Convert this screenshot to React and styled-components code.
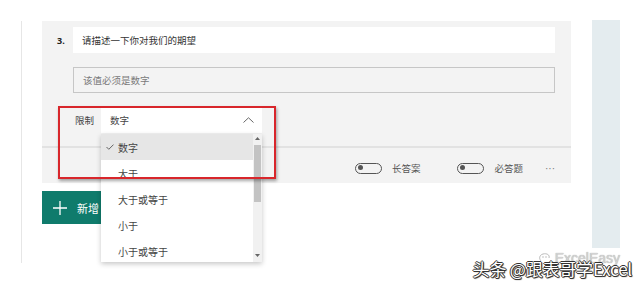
import React from "react";
import styled, { createGlobalStyle } from "styled-components";

const GlobalStyle = createGlobalStyle`
  html, body {
    margin: 0;
    padding: 0;
    background: #fff;
  }
  body {
    font-family: "Noto Sans CJK SC", "Noto Sans", sans-serif;
    color: #333;
  }
`;

const Page = styled.div`
  position: relative;
  width: 640px;
  height: 283px;
  overflow: hidden;
  display: flex;
  padding-top: 21px;
  padding-left: 21px;
  box-sizing: border-box;
`;

const Main = styled.div`
  width: 571px;
  height: 242px;
  border-left: 1px solid #e6e6e6;
  padding-left: 20px;
  box-sizing: border-box;
`;

const SidePanel = styled.div`
  width: 28px;
  height: 228px;
  margin-top: -1px;
  background: #e4ecef;
`;

const Card = styled.div`
  width: 529px;
  background: #f3f3f3;
`;

const CardBody = styled.div`
  padding: 6px 16px 13px 15px;
  border-bottom: 2px solid #e2e2e2;
  display: flex;
  flex-direction: column;
  gap: 14px;
`;

const QuestionRow = styled.div`
  display: flex;
  align-items: center;
`;

const Number = styled.span`
  width: 16px;
  font-family: "Noto Sans", sans-serif;
  font-weight: 700;
  font-size: 9px;
  color: #222;
`;

const QuestionBox = styled.div`
  flex: 1;
  height: 26px;
  background: #fff;
  display: flex;
  align-items: center;
  padding-left: 9px;
  font-size: 9.5px;
  color: #333;
`;

const AnswerBox = styled.div`
  margin-left: 16px;
  height: 26px;
  border: 1px solid #c6c6c6;
  box-sizing: border-box;
  display: flex;
  align-items: center;
  padding-left: 9px;
  font-size: 9.5px;
  color: #7a7a7a;
`;

const LimitRow = styled.div`
  position: relative;
  display: flex;
  align-items: center;
  padding-left: 18px;
`;

const LimitLabel = styled.span`
  width: 26px;
  font-size: 9.5px;
  color: #444;
`;

const SelectWrap = styled.div`
  position: relative;
  width: 161px;
`;

const SelectBox = styled.div`
  height: 26px;
  background: #fff;
  display: flex;
  align-items: center;
  justify-content: space-between;
  padding: 0 8px 0 9px;
  font-size: 9.5px;
  color: #444;
`;

const Dropdown = styled.div`
  position: absolute;
  top: 27px;
  left: 0;
  width: 161px;
  height: 128px;
  background: #fff;
  box-shadow: 0 2px 5px rgba(0, 0, 0, 0.22);
  display: flex;
  overflow: hidden;
  z-index: 5;
`;

const OptionList = styled.div`
  flex: 1;
`;

const Option = styled.div`
  height: 26px;
  display: flex;
  align-items: center;
  padding-left: ${(p) => (p.$selected ? "5px" : "17px")};
  gap: 4px;
  font-size: 10px;
  color: #444;
  background: ${(p) => (p.$selected ? "#e6e6e6" : "#fff")};
`;

const Scrollbar = styled.div`
  width: 9px;
  background: #f1f1f1;
  display: flex;
  flex-direction: column;
  align-items: center;
  justify-content: space-between;
  padding: 3px 0 5px;
  box-sizing: border-box;
  position: relative;
`;

const Thumb = styled.div`
  position: absolute;
  top: 11px;
  left: 1px;
  width: 7px;
  height: 57px;
  background: #c3c3c3;
`;

const Annotation = styled.div`
  position: absolute;
  left: 1px;
  top: -1px;
  width: 218px;
  height: 73px;
  border: 2px solid #d8262b;
  box-sizing: border-box;
  box-shadow: 1px 2px 3px rgba(0, 0, 0, 0.35);
  z-index: 6;
  pointer-events: none;
`;

const CardFooter = styled.div`
  height: 35px;
  display: flex;
  align-items: center;
  justify-content: flex-end;
  padding-right: 16px;
  padding-top: 5px;
  box-sizing: border-box;
`;

const ToggleGroup = styled.div`
  display: flex;
  align-items: center;
  gap: 10px;
  margin-right: ${(p) => p.$gap}px;
  font-size: 9.5px;
  color: #555;
`;

const Toggle = styled.div`
  width: 27px;
  height: 11px;
  border: 1.5px solid #555;
  border-radius: 8px;
  box-sizing: border-box;
  position: relative;
  &::after {
    content: "";
    position: absolute;
    left: 2px;
    top: 1.5px;
    width: 5px;
    height: 5px;
    border-radius: 50%;
    background: #555;
  }
`;

const More = styled.span`
  font-family: "Liberation Sans", sans-serif;
  font-size: 10px;
  color: #777;
`;

const AddButton = styled.div`
  margin-top: 8px;
  width: 92px;
  height: 33px;
  background: #0f7b6c;
  color: #fff;
  display: flex;
  align-items: center;
  gap: 10px;
  padding-left: 11px;
  box-sizing: border-box;
  font-size: 11px;
`;

const Watermark = styled.div`
  position: absolute;
  right: 8px;
  bottom: 4px;
  display: flex;
  flex-direction: column;
  align-items: flex-end;
  z-index: 10;
`;

const Faded = styled.div`
  display: flex;
  align-items: center;
  gap: 4px;
  margin-right: 12px;
  margin-bottom: -7px;
  font-family: "Liberation Sans", sans-serif;
  font-size: 14px;
  color: #d2d2d2;
  text-shadow: 0 0 1px #999;
`;

const Signature = styled.div`
  font-family: "Noto Sans CJK SC", "Liberation Sans", sans-serif;
  font-size: 17px;
  line-height: 20px;
  color: #fff;
  text-shadow: -1px 0 0 #333, 1px 0 0 #333, 0 -1px 0 #333, 0 1px 0 #333,
    1px 1px 1px #222;
  letter-spacing: -0.2px;
`;

const Chevron = () => (
  <svg width="11" height="6" viewBox="0 0 11 6">
    <path d="M0.5 5.5 L5.5 0.8 L10.5 5.5" fill="none" stroke="#666" strokeWidth="1" />
  </svg>
);

const Check = () => (
  <svg width="8" height="6" viewBox="0 0 8 6">
    <path d="M0.5 3 L2.8 5.3 L7.5 0.6" fill="none" stroke="#555" strokeWidth="0.9" />
  </svg>
);

const Arrow = ({ up }) => (
  <svg width="5" height="3" viewBox="0 0 5 3">
    <path d={up ? "M0 3 L2.5 0 L5 3 Z" : "M0 0 L2.5 3 L5 0 Z"} fill="#666" />
  </svg>
);

const Plus = () => (
  <svg width="14" height="14" viewBox="0 0 14 14">
    <path d="M7 0 V14 M0 7 H14" stroke="#fff" strokeWidth="1.3" />
  </svg>
);

const Bubble = () => (
  <svg width="12" height="10" viewBox="0 0 12 10">
    <path d="M2 8 C0 6 0 2 4 1 C8 0 11 2 10 5" fill="none" stroke="#bbb" strokeWidth="1" />
    <circle cx="4" cy="4" r="0.8" fill="#bbb" />
    <circle cx="7" cy="4" r="0.8" fill="#bbb" />
  </svg>
);

const options = ["数字", "大于", "大于或等于", "小于", "小于或等于"];

export default function App() {
  return (
    <>
      <GlobalStyle />
      <Page>
        <Main>
          <Card>
            <CardBody>
              <QuestionRow>
                <Number>3.</Number>
                <QuestionBox>请描述一下你对我们的期望</QuestionBox>
              </QuestionRow>
              <AnswerBox>该值必须是数字</AnswerBox>
              <LimitRow>
                <Annotation />
                <LimitLabel>限制</LimitLabel>
                <SelectWrap>
                  <SelectBox>
                    数字
                    <Chevron />
                  </SelectBox>
                  <Dropdown>
                    <OptionList>
                      {options.map((o, i) => (
                        <Option key={o} $selected={i === 0}>
                          {i === 0 && <Check />}
                          {o}
                        </Option>
                      ))}
                    </OptionList>
                    <Scrollbar>
                      <Arrow up />
                      <Thumb />
                      <Arrow />
                    </Scrollbar>
                  </Dropdown>
                </SelectWrap>
              </LimitRow>
            </CardBody>
            <CardFooter>
              <ToggleGroup $gap={37}>
                <Toggle />
                长答案
              </ToggleGroup>
              <ToggleGroup $gap={22}>
                <Toggle />
                必答题
              </ToggleGroup>
              <More>···</More>
            </CardFooter>
          </Card>
          <AddButton>
            <Plus />
            新增
          </AddButton>
        </Main>
        <SidePanel />
        <Watermark>
          <Faded>
            <Bubble />
            ExcelEasy
          </Faded>
          <Signature>头条 @跟表哥学Excel</Signature>
        </Watermark>
      </Page>
    </>
  );
}
